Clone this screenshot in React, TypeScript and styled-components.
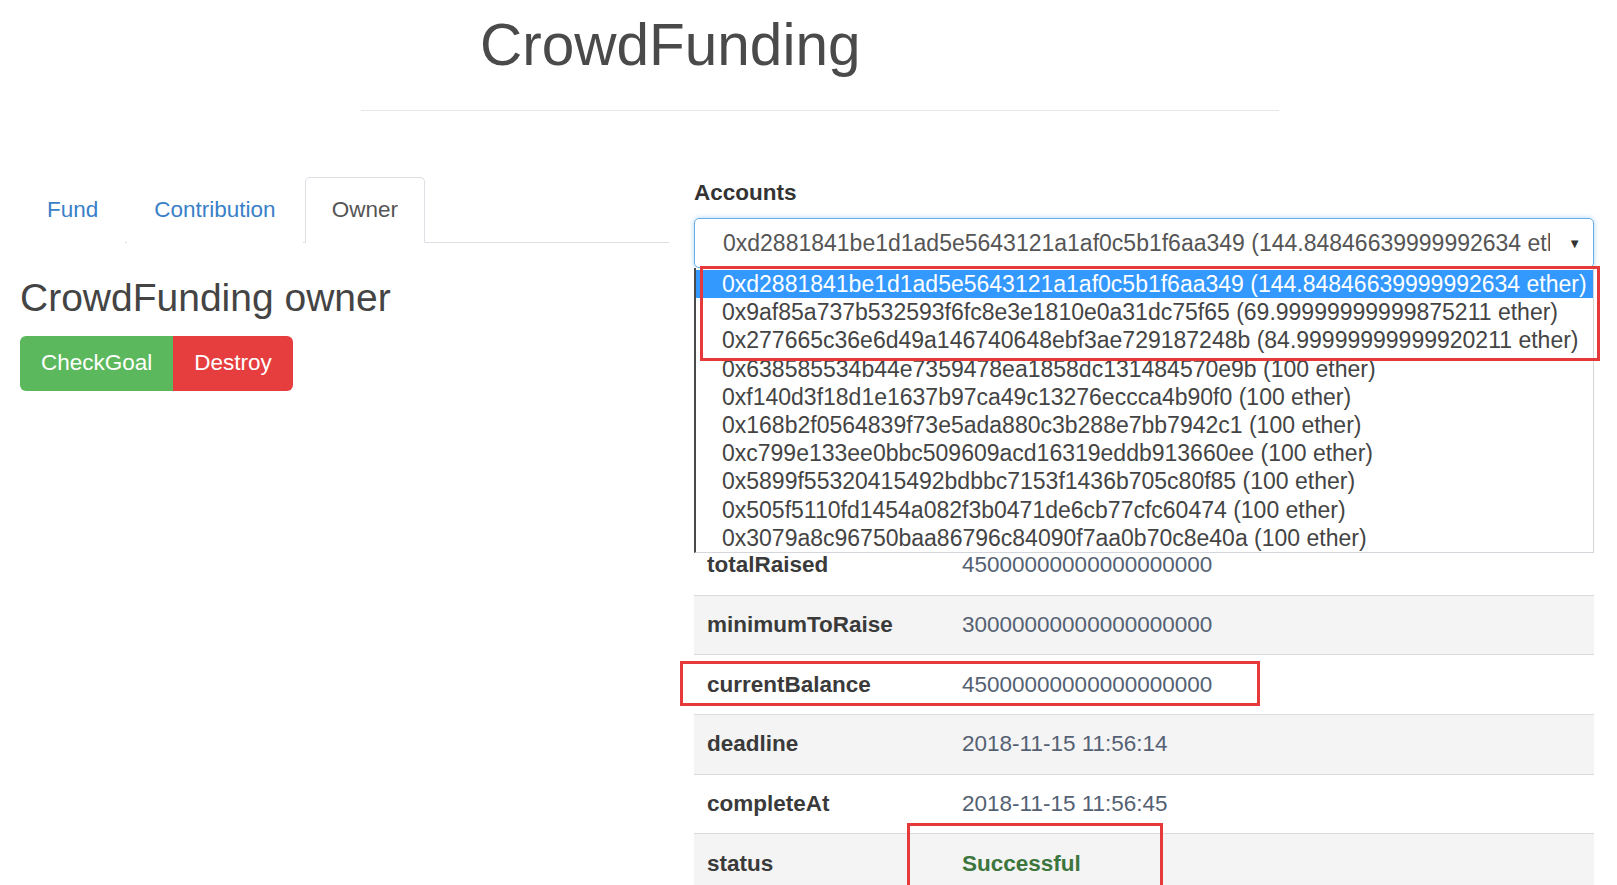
import React from "react";
import styled, { createGlobalStyle } from "styled-components";

const GlobalStyle = createGlobalStyle`
  html, body {
    margin: 0;
    padding: 0;
    overflow: hidden;
    background: #fff;
  }
  body {
    font-family: "Liberation Sans", Arial, Helvetica, sans-serif;
    color: #333;
  }
  * { box-sizing: border-box; }
`;

const Header = styled.header`
  width: 918px;
  margin-left: 361px;
  height: 111px;
  padding-top: 13px;
  border-bottom: 1px solid #e6e6e6;
`;

const Title = styled.h1`
  margin: 0 0 0 119px;
  font-size: 58.5px;
  line-height: 1.1;
  font-weight: 400;
  color: #4a4a4a;
`;

const Main = styled.main`
  display: flex;
  gap: 25px;
  padding-left: 20px;
`;

const LeftCol = styled.section`
  width: 649px;
  padding-top: 66px;
`;

const RightCol = styled.section`
  width: 900px;
`;

const Tabs = styled.nav`
  display: flex;
  height: 66px;
  border-bottom: 1px solid #dcdfe3;
`;

const Tab = styled.a<{ $active?: boolean }>`
  display: flex;
  align-items: center;
  height: 66px;
  padding: 0 26px;
  margin-right: 2px;
  font-size: 22.5px;
  text-decoration: none;
  color: ${(p) => (p.$active ? "#555" : "#3a80c8")};
  background: #fff;
  border: 1px solid ${(p) => (p.$active ? "#dcdfe3" : "transparent")};
  border-bottom-color: ${(p) => (p.$active ? "#fff" : "transparent")};
  border-radius: 5px 5px 0 0;
`;

const SubTitle = styled.h2`
  margin: 34px 0 16px;
  font-size: 39px;
  line-height: 1.1;
  font-weight: 400;
  color: #444;
`;

const BtnGroup = styled.div`
  display: inline-flex;
  border-radius: 6px;
  overflow: hidden;
`;

const Btn = styled.button<{ $tone: "success" | "danger" }>`
  height: 55px;
  padding: 0 21px;
  border: none;
  font-family: inherit;
  font-size: 22.5px;
  color: #fff;
  background: ${(p) => (p.$tone === "success" ? "#5cb85c" : "#e63e3e")};
`;

const FieldLabel = styled.div`
  margin-top: 68px;
  font-size: 22.5px;
  line-height: 27px;
  font-weight: 700;
  color: #333;
`;

const SelectWrap = styled.div`
  position: relative;
  margin-top: 12px;
  z-index: 2;
`;

const SelectBox = styled.div`
  height: 50px;
  display: flex;
  align-items: center;
  gap: 18px;
  padding: 0 12px 0 28px;
  border: 1px solid #66afe9;
  border-radius: 5px;
  box-shadow: 0 0 5px rgba(102, 175, 233, 0.55);
  font-size: 23px;
  color: #555;
`;

const SelectText = styled.span`
  flex: 1;
  min-width: 0;
  white-space: nowrap;
  overflow: hidden;
`;

const Caret = styled.span`
  font-size: 13px;
  color: #333;
`;

const OptionList = styled.ul`
  position: absolute;
  top: 50px;
  left: 0;
  width: 900px;
  margin: 0;
  padding: 2px 0 0;
  list-style: none;
  background: #fff;
  border-left: 2px solid #4a4a4a;
  border-right: 1px solid #d6d6d6;
  border-bottom: 1px solid #d3d7dc;
`;

const OptionItem = styled.li<{ $selected?: boolean }>`
  height: 28.2px;
  line-height: 28.2px;
  padding-left: 26px;
  font-size: 23px;
  white-space: nowrap;
  color: ${(p) => (p.$selected ? "#fff" : "#444")};
  background: ${(p) => (p.$selected ? "#3399ff" : "transparent")};
`;

const Mark = styled.div`
  position: absolute;
  border: 3px solid #e5393b;
  pointer-events: none;
`;

const Table = styled.div`
  margin-top: 267px;
`;

const Row = styled.div<{ $striped?: boolean }>`
  position: relative;
  display: grid;
  grid-template-columns: 268px 1fr;
  align-items: center;
  height: 59.7px;
  border-top: 1px solid #d8dce0;
  background: ${(p) => (p.$striped ? "#f4f4f4" : "#fff")};
  font-size: 22.5px;
`;

const Label = styled.div`
  padding-left: 13px;
  font-weight: 700;
  color: #3a3a3a;
`;

const Value = styled.div<{ $ok?: boolean }>`
  position: relative;
  color: ${(p) => (p.$ok ? "#3c763d" : "#546173")};
  font-weight: ${(p) => (p.$ok ? 700 : 400)};
`;

const accounts = [
  "0xd2881841be1d1ad5e5643121a1af0c5b1f6aa349 (144.84846639999992634 ether)",
  "0x9af85a737b532593f6fc8e3e1810e0a31dc75f65 (69.99999999999875211 ether)",
  "0x277665c36e6d49a146740648ebf3ae729187248b (84.99999999999920211 ether)",
  "0x638585534b44e7359478ea1858dc131484570e9b (100 ether)",
  "0xf140d3f18d1e1637b97ca49c13276eccca4b90f0 (100 ether)",
  "0x168b2f0564839f73e5ada880c3b288e7bb7942c1 (100 ether)",
  "0xc799e133ee0bbc509609acd16319eddb913660ee (100 ether)",
  "0x5899f55320415492bdbbc7153f1436b705c80f85 (100 ether)",
  "0x505f5110fd1454a082f3b0471de6cb77cfc60474 (100 ether)",
  "0x3079a8c96750baa86796c84090f7aa0b70c8e40a (100 ether)",
];

export default function App() {
  return (
    <>
      <GlobalStyle />
      <Header>
        <Title>CrowdFunding</Title>
      </Header>
      <Main>
        <LeftCol>
          <Tabs>
            <Tab href="#">Fund</Tab>
            <Tab href="#">Contribution</Tab>
            <Tab href="#" $active>
              Owner
            </Tab>
          </Tabs>
          <SubTitle>CrowdFunding owner</SubTitle>
          <BtnGroup>
            <Btn $tone="success">CheckGoal</Btn>
            <Btn $tone="danger">Destroy</Btn>
          </BtnGroup>
        </LeftCol>
        <RightCol>
          <FieldLabel>Accounts</FieldLabel>
          <SelectWrap>
            <SelectBox>
              <SelectText>{accounts[0]}</SelectText>
              <Caret>▼</Caret>
            </SelectBox>
            <OptionList>
              {accounts.map((a, i) => (
                <OptionItem key={a} $selected={i === 0}>
                  {a}
                </OptionItem>
              ))}
            </OptionList>
            <Mark style={{ left: 6, top: 48, width: 900, height: 95 }} />
          </SelectWrap>
          <Table>
            <Row>
              <Label>totalRaised</Label>
              <Value>45000000000000000000</Value>
            </Row>
            <Row $striped>
              <Label>minimumToRaise</Label>
              <Value>30000000000000000000</Value>
            </Row>
            <Row>
              <Label>currentBalance</Label>
              <Value>45000000000000000000</Value>
              <Mark style={{ left: -14, top: 6, width: 580, height: 45 }} />
            </Row>
            <Row $striped>
              <Label>deadline</Label>
              <Value>2018-11-15 11:56:14</Value>
            </Row>
            <Row>
              <Label>completeAt</Label>
              <Value>2018-11-15 11:56:45</Value>
            </Row>
            <Row $striped>
              <Label>status</Label>
              <Value $ok>
                Successful
                <Mark style={{ left: -55, top: -28, width: 256, height: 90 }} />
              </Value>
            </Row>
          </Table>
        </RightCol>
      </Main>
    </>
  );
}
